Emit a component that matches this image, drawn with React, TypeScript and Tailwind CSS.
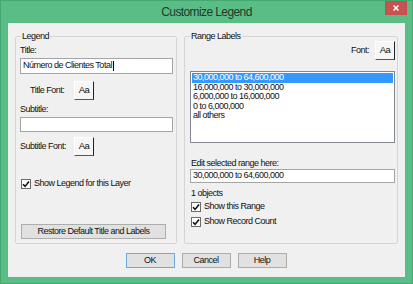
import React from 'react';

const ranges = [
  '30,000,000 to 64,600,000',
  '16,000,000 to 30,000,000',
  '6,000,000 to 16,000,000',
  '0 to 6,000,000',
  'all others',
];

function AaButton() {
  return (
    <div className="w-[20px] h-[19px] shrink-0 bg-[#f6f6f6] border border-t-white border-l-white border-r-[#222] border-b-[#555] flex items-center justify-center text-[9.5px]">
      Aa
    </div>
  );
}

function Check({ label }: { label: string }) {
  return (
    <div className="flex items-center h-[12px] pl-[1px]">
      <span className="w-[10px] h-[10px] border border-[#6b6b6b] bg-white flex items-center justify-center">
        <svg width="8" height="8" viewBox="0 0 8 8">
          <path d="M1 4.2 L3.1 6.4 L7 1.4" fill="none" stroke="#111" strokeWidth="1.6" />
        </svg>
      </span>
      <span className="ml-[3px]">{label}</span>
    </div>
  );
}

function PushButton({ label, className = '' }: { label: string; className?: string }) {
  return (
    <div className={`h-[15px] bg-[#e1e1e1] border flex items-center justify-center ${className}`}>
      {label}
    </div>
  );
}

export default function App() {
  return (
    <div className="w-[413px] h-[284px] bg-[#5bbd86] border border-[#46a771] flex flex-col font-['Liberation_Sans',Arial,sans-serif] text-[9px] tracking-[-0.5px] text-[#111]">
      {/* title bar */}
      <div className="h-[22px] grid grid-cols-[1fr_auto_1fr]">
        <div />
        <div className="leading-[22px] text-[12px] tracking-[-0.6px] text-[#1d3b2a]">Customize Legend</div>
        <div className="flex justify-end">
          <div className="w-[22px] h-[14px] mr-[5px] bg-[#c75050] flex items-center justify-center">
            <svg width="6" height="6" viewBox="0 0 6 6">
              <path d="M0.5 0.5 L5.5 5.5 M5.5 0.5 L0.5 5.5" stroke="#fff" strokeWidth="1.5" />
            </svg>
          </div>
        </div>
      </div>

      {/* client area */}
      <div className="mx-[7px] h-[254px] bg-[#f0f0f0] pt-[8px] px-[7px]">
        <div className="flex gap-[7px] h-[213px]">
          <fieldset className="w-[162px] min-w-0 border border-[#d5d5d5] rounded-[2px] pl-[4px] pr-[3px] flex flex-col">
            <legend className="leading-[10px] px-[1px] ml-[1px]">Legend</legend>
            <div className="mt-[3px] leading-[12px]">Title:</div>
            <div className="mt-[2px] h-[16px] bg-white border border-[#a5a5a5] flex items-center pl-[2px]">
              Número de Clientes Total
              <span className="w-[1px] h-[10px] bg-black ml-[1px]" />
            </div>
            <div className="mt-[7px] h-[19px] flex items-center">
              <div className="w-[54px] pl-[10px]">Title Font:</div>
              <AaButton />
            </div>
            <div className="mt-[3px] leading-[12px]">Subtitle:</div>
            <div className="mt-[2px] h-[15px] bg-white border border-[#a5a5a5]" />
            <div className="mt-[5px] h-[19px] flex items-center">
              <div className="w-[54px]">Subtitle Font:</div>
              <AaButton />
            </div>
            <div className="mt-[22px]">
              <Check label="Show Legend for this Layer" />
            </div>
            <PushButton label="Restore Default Title and Labels" className="mt-[34px] ml-[1px] w-[145px] border-[#adadad]" />
          </fieldset>

          <fieldset className="flex-1 min-w-0 border border-[#d5d5d5] rounded-[2px] pl-[5px] pr-[2px] flex flex-col">
            <legend className="leading-[10px] px-[1px]">Range Labels</legend>
            <div className="h-[19px] flex justify-end items-center">
              <span className="mr-[6px]">Font:</span>
              <AaButton />
            </div>
            <div className="mt-[11px] h-[72px] bg-white border border-[#828790] pt-[1px] px-[1px]">
              {ranges.map((r, i) => (
                <div
                  key={r}
                  className={`h-[9.5px] leading-[9.5px] pl-[1px] ${i === 0 ? 'bg-[#3399ff] text-white' : ''}`}
                >
                  {r}
                </div>
              ))}
            </div>
            <div className="mt-[14px] leading-[12px] pl-[1px]">Edit selected range here:</div>
            <div className="h-[14px] bg-white border border-[#a5a5a5] flex items-center pl-[2px]">
              30,000,000 to 64,600,000
            </div>
            <div className="mt-[4px] leading-[12px] pl-[1px]">1 objects</div>
            <div className="mt-[2px]">
              <Check label="Show this Range" />
            </div>
            <div className="mt-[3px]">
              <Check label="Show Record Count" />
            </div>
          </fieldset>
        </div>

        <div className="mt-[9px] flex justify-center gap-[7px] pr-[1px]">
          <PushButton label="OK" className="w-[49px] border-[#6fa8dc]" />
          <PushButton label="Cancel" className="w-[49px] border-[#adadad]" />
          <PushButton label="Help" className="w-[49px] border-[#adadad]" />
        </div>
      </div>
    </div>
  );
}
